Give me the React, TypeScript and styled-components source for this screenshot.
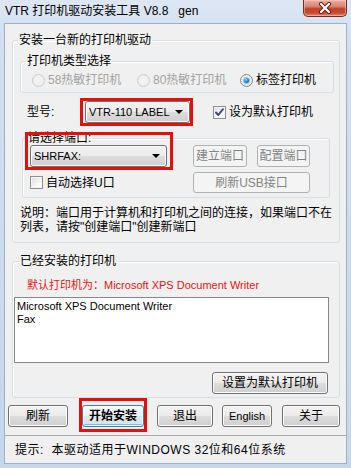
import React from "react";
import styled, { createGlobalStyle, css } from "styled-components";

const FONT = `"Liberation Sans", "Noto Sans CJK SC", sans-serif`;

const Global = createGlobalStyle`
  html, body {
    margin: 0;
    padding: 0;
  }
  body {
    width: 351px;
    height: 468px;
    overflow: hidden;
    font-family: ${FONT};
    font-size: 12px;
    color: #000;
  }
`;

const Window = styled.div`
  width: 351px;
  height: 468px;
  box-sizing: border-box;
  display: flex;
  flex-direction: column;
  padding: 0 4px 4px;
  background: linear-gradient(180deg, #dde7f4 0%, #d2dff0 40px, #c6d6eb 100%);
`;

const TitleBar = styled.div`
  height: 23px;
  display: flex;
  align-items: flex-start;
`;

const Title = styled.div`
  flex: 1;
  padding: 4px 0 0 1px;
  line-height: 14px;
  white-space: pre;
`;

const CloseBtn = styled.div`
  width: 44px;
  height: 17px;
  box-sizing: border-box;
  border: 1px solid #6e2e22;
  border-top: none;
  border-radius: 0 0 5px 5px;
  background: linear-gradient(
    180deg,
    #eab0a1 0%,
    #d98570 40%,
    #c2412a 55%,
    #c9482e 80%,
    #e3866a 100%
  );
  box-shadow: inset 0 0 0 1px rgba(255, 220, 210, 0.45);
  display: flex;
  align-items: center;
  justify-content: center;
`;

const Client = styled.div`
  flex: 1;
  display: flex;
  flex-direction: column;
  border: 1px solid #9fb0c8;
  background: #f0f0f0;
`;

const Main = styled.div`
  padding-top: 9px;
  display: flex;
  flex-direction: column;
`;

const frame = css`
  margin: 0;
  min-width: 0;
  border: 1px solid #d5dfe5;
  border-radius: 3px;
  box-shadow: inset 1px 1px 0 #fff;
`;

const Group = styled.fieldset<{ $pad: string; $gap?: number }>`
  ${frame};
  margin: ${(p) => p.$gap ?? 0}px 6px 0 7px;
  padding: ${(p) => p.$pad};
`;

const Legend = styled.legend<{ $indent: number }>`
  padding: 0 1px;
  margin-left: ${(p) => p.$indent}px;
  line-height: 14px;
  font-size: 12px;
`;

const TypeGroup = styled.fieldset`
  ${frame};
  margin-top: 7px;
  padding: 4px 0 4px 6px;
`;

const RadioRow = styled.div`
  margin-left: 5px;
  height: 16px;
  display: grid;
  grid-template-columns: 105px 103px auto;
  align-items: center;
`;

const Option = styled.label<{ $disabled?: boolean }>`
  display: flex;
  align-items: center;
  gap: 3px;
  line-height: 14px;
  white-space: nowrap;
  color: ${(p) => (p.$disabled ? "#a3a3a3" : "#000")};
`;

const RadioDot = styled.span<{ $on?: boolean; $disabled?: boolean }>`
  width: 13px;
  height: 13px;
  box-sizing: border-box;
  border-radius: 50%;
  border: 1px solid ${(p) => (p.$disabled ? "#cbcdce" : "#8a8a8a")};
  background: ${(p) =>
    p.$disabled
      ? "radial-gradient(circle, #f4f4f4 0, #ececec 100%)"
      : "radial-gradient(circle at 50% 40%, #ffffff 0, #e2e3e5 75%, #f3f3f3 100%)"};
  display: flex;
  align-items: center;
  justify-content: center;
  &::after {
    content: "";
    display: ${(p) => (p.$on ? "block" : "none")};
    width: 5px;
    height: 5px;
    border-radius: 50%;
    background: radial-gradient(circle at 40% 35%, #9fe2ff 0, #2a86cf 45%, #0c3f7d 100%);
    box-shadow: 0 0 0 1px #8cc6ea;
  }
`;

const CheckBox = styled.span`
  width: 13px;
  height: 13px;
  box-sizing: border-box;
  border: 1px solid #8e8f8f;
  background: linear-gradient(135deg, #dcdcdc 0%, #f6f6f6 60%, #ffffff 100%);
  box-shadow: inset 0 0 0 1px #f4f4f4;
  display: flex;
  align-items: center;
  justify-content: center;
`;

const ModelRow = styled.div`
  margin-top: 5px;
  padding-left: 7px;
  display: flex;
  align-items: center;
`;

const FieldLabel = styled.span`
  width: 53px;
  line-height: 14px;
`;

const Mark = styled.div`
  border: 3px solid #e4100c;
  padding-left: 2px;
  display: flex;
`;

const MarkOver = styled.div<{ $t: number; $l: number; $w: number; $h: number }>`
  position: absolute;
  top: ${(p) => p.$t}px;
  left: ${(p) => p.$l}px;
  width: ${(p) => p.$w}px;
  height: ${(p) => p.$h}px;
  box-sizing: border-box;
  border: 3px solid #e4100c;
  pointer-events: none;
`;

const winButton = css`
  box-sizing: border-box;
  border: 1px solid #707070;
  border-radius: 3px;
  background: linear-gradient(180deg, #f2f2f2 0%, #ebebeb 50%, #dddddd 51%, #cfcfcf 100%);
  box-shadow: inset 0 0 0 1px #fbfbfb;
  font-family: ${FONT};
  line-height: 14px;
  color: #000;
`;

const Combo = styled.div<{ $w: number }>`
  ${winButton};
  width: ${(p) => p.$w}px;
  height: 22px;
  padding: 0 6px 0 3px;
  font-size: 11px;
  display: flex;
  align-items: center;
  justify-content: space-between;
  white-space: nowrap;
`;

const Arrow = styled.span`
  width: 0;
  height: 0;
  border-left: 4px solid transparent;
  border-right: 4px solid transparent;
  border-top: 4px solid #000;
`;

const DefaultCheck = styled(Option)`
  margin-left: 20px;
`;

const PortGroup = styled.fieldset`
  ${frame};
  margin: 5px 4px 0 2px;
  padding: 0 0 4px 7px;
`;

const PortGrid = styled.div`
  position: relative;
  display: grid;
  grid-template-columns: 163px 64px 53px;
  grid-template-rows: 22px 21px;
  row-gap: 5px;
  align-items: center;
`;

const Button = styled.button<{
  $w: number;
  $h?: number;
  $fs?: number;
  $span?: boolean;
  $primary?: boolean;
}>`
  ${winButton};
  width: ${(p) => p.$w}px;
  height: ${(p) => p.$h ?? 22}px;
  padding: 0;
  font-size: ${(p) => p.$fs ?? 12}px;
  grid-column: ${(p) => (p.$span ? "span 2" : "auto")};
  font-weight: ${(p) => (p.$primary ? 700 : 400)};
  ${(p) =>
    p.$primary &&
    css`
      border-color: #3c7fb1;
      background: linear-gradient(180deg, #f7f9fa 0%, #eef1f3 50%, #e2e6e9 51%, #d3e3ec 100%);
      box-shadow: inset 0 0 0 1px #fafcfd, inset 0 -2px 0 #62c6ee;
    `}
  &:disabled {
    border-color: #adb2b5;
    background: #f4f4f4;
    box-shadow: none;
    color: #838383;
  }
`;

const Note = styled.div`
  margin-top: 8px;
  line-height: 14px;
  white-space: nowrap;
`;

const DefaultInfo = styled.div`
  margin: 10px 0 0 13px;
  line-height: 14px;
  font-size: 11px;
  color: #e3140f;
`;

const Column = styled.div`
  display: flex;
  flex-direction: column;
`;

const ListBox = styled.div`
  margin-top: 5px;
  width: 315px;
  height: 66px;
  box-sizing: border-box;
  border: 1px solid #828790;
  background: #fff;
  padding: 2px 2px;
  font-size: 11px;
  line-height: 13px;
`;

const SetDefault = styled(Button)`
  align-self: flex-end;
  margin: 9px 2px 0 0;
`;

const ButtonRow = styled.div`
  margin-top: 7px;
  padding-left: 3px;
  display: grid;
  grid-template-columns: 74px 75px 65px 60px 58px;
`;

const Slot = styled.div`
  position: relative;
  display: flex;
`;

const Status = styled.div`
  margin-top: auto;
  height: 28px;
  box-sizing: border-box;
  border-top: 1px solid #a9a9a9;
  padding: 7px 0 0 10px;
  line-height: 14px;
  letter-spacing: 0.5px;
  white-space: pre;
`;

const Tick = () => (
  <svg width="11" height="11" viewBox="0 0 11 11">
    <path d="M2 5.5 L4.3 8 L9 2.2" fill="none" stroke="#3c4a6e" strokeWidth="1.9" strokeLinecap="round" strokeLinejoin="round" />
  </svg>
);

const CloseX = () => (
  <svg width="14" height="12" viewBox="0 0 14 12">
    <path d="M3 2 L11 10 M11 2 L3 10" stroke="#5a1d14" strokeWidth="4" strokeLinecap="round" />
    <path d="M3 2 L11 10 M11 2 L3 10" stroke="#ffffff" strokeWidth="2.2" strokeLinecap="round" />
  </svg>
);

const printers = ["Microsoft XPS Document Writer", "Fax"];

const bottomButtons = [
  { text: "刷新", w: 60 },
  { text: "开始安装", w: 62, primary: true },
  { text: "退出", w: 56 },
  { text: "English", w: 50, fs: 11 },
  { text: "关于", w: 58 },
];

export default function App() {
  return (
    <>
      <Global />
      <Window>
        <TitleBar>
          <Title>{"VTR 打印机驱动安装工具 V8.8   gen"}</Title>
          <CloseBtn>
            <CloseX />
          </CloseBtn>
        </TitleBar>
        <Client>
          <Main>
            <Group $pad="0 5px 8px 7px">
              <Legend $indent={-2}>安装一台新的打印机驱动</Legend>
              <TypeGroup>
                <Legend $indent={-1}>打印机类型选择</Legend>
                <RadioRow>
                  <Option $disabled>
                    <RadioDot $disabled />
                    58热敏打印机
                  </Option>
                  <Option $disabled>
                    <RadioDot $disabled />
                    80热敏打印机
                  </Option>
                  <Option>
                    <RadioDot $on />
                    标签打印机
                  </Option>
                </RadioRow>
              </TypeGroup>
              <ModelRow>
                <FieldLabel>型号:</FieldLabel>
                <Mark>
                  <Combo $w={105}>
                    VTR-110 LABEL
                    <Arrow />
                  </Combo>
                </Mark>
                <DefaultCheck>
                  <CheckBox>
                    <Tick />
                  </CheckBox>
                  设为默认打印机
                </DefaultCheck>
              </ModelRow>
              <PortGroup>
                <Legend $indent={-3}>请选择端口:</Legend>
                <PortGrid>
                  <Combo $w={137}>
                    SHRFAX:
                    <Arrow />
                  </Combo>
                  <Button $w={54} disabled>
                    建立端口
                  </Button>
                  <Button $w={53} disabled>
                    配置端口
                  </Button>
                  <Option>
                    <CheckBox />
                    自动选择U口
                  </Option>
                  <Button $w={117} $h={21} $span disabled>
                    刷新USB接口
                  </Button>
                  <MarkOver $t={-13} $l={-5} $w={148} $h={38} />
                </PortGrid>
              </PortGroup>
              <Note>
                说明：端口用于计算机和打印机之间的连接，如果端口不在
                <br />
                列表，请按"创建端口"创建新端口
              </Note>
            </Group>
            <Group $pad="0 9px 3px 1px" $gap={11}>
              <Legend $indent={5}>已经安装的打印机</Legend>
              <Column>
                <DefaultInfo>默认打印机为：Microsoft XPS Document Writer</DefaultInfo>
                <ListBox>
                  {printers.map((p) => (
                    <div key={p}>{p}</div>
                  ))}
                </ListBox>
                <SetDefault $w={116}>设置为默认打印机</SetDefault>
              </Column>
            </Group>
            <ButtonRow>
              {bottomButtons.map((b) => (
                <Slot key={b.text}>
                  <Button $w={b.w} $fs={b.fs} $primary={b.primary}>
                    {b.text}
                  </Button>
                  {b.primary && <MarkOver $t={-7} $l={-3} $w={68} $h={34} />}
                </Slot>
              ))}
            </ButtonRow>
          </Main>
          <Status>{"提示:  本驱动适用于WINDOWS 32位和64位系统"}</Status>
        </Client>
      </Window>
    </>
  );
}
